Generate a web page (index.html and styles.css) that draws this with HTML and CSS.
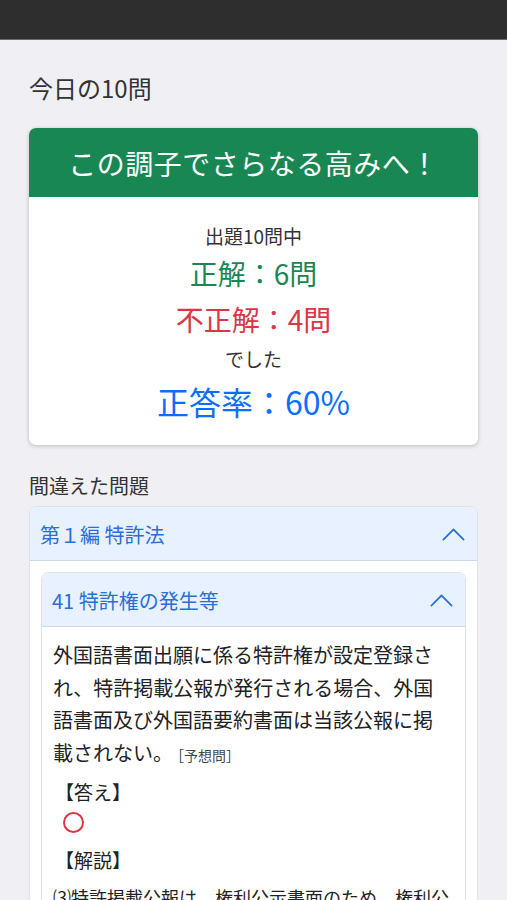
FILE: index.html
```html
<!DOCTYPE html>
<html lang="ja">
<head>
<meta charset="utf-8">
<title>今日の10問</title>
<link rel="stylesheet" href="styles.css">
</head>
<body>
<div class="topbar"></div>
<main class="page">
  <h1 class="page-title">今日の10問</h1>

  <section class="result-card">
    <div class="result-head">この調子でさらなる高みへ！</div>
    <div class="result-body">
      <p class="line small">出題10問中</p>
      <p class="line big green">正解：6問</p>
      <p class="line big red">不正解：4問</p>
      <p class="line small gap">でした</p>
      <p class="line huge blue">正答率：60%</p>
    </div>
  </section>

  <h2 class="section-title">間違えた問題</h2>

  <div class="accordion">
    <div class="acc-head">
      <span class="acc-label">第１編 特許法</span>
      <svg class="chev" viewBox="0 0 16 16"><path d="M1.646 11.354a.5.5 0 0 0 .708 0L8 5.707l5.646 5.647a.5.5 0 0 0 .708-.708l-6-6a.5.5 0 0 0-.708 0l-6 6a.5.5 0 0 0 0 .708z"/></svg>
    </div>
    <div class="acc-body">
      <div class="accordion inner">
        <div class="acc-head">
          <span class="acc-label">41 特許権の発生等</span>
          <svg class="chev" viewBox="0 0 16 16"><path d="M1.646 11.354a.5.5 0 0 0 .708 0L8 5.707l5.646 5.647a.5.5 0 0 0 .708-.708l-6-6a.5.5 0 0 0-.708 0l-6 6a.5.5 0 0 0 0 .708z"/></svg>
        </div>
        <div class="acc-body question">
          <p class="q-text">外国語書面出願に係る特許権が設定登録され、特許掲載公報が発行される場合、外国語書面及び外国語要約書面は当該公報に掲載されない。<span class="q-tag">［予想問］</span></p>
          <p class="label answer-label">【答え】</p>
          <div class="maru"></div>
          <p class="label">【解説】</p>
          <p class="explain">⑶特許掲載公報は、権利公示書面のため、権利公示に必要な事項を掲載する。</p>
        </div>
      </div>
    </div>
  </div>
</main>
</body>
</html>
```

FILE: styles.css
```css
* { box-sizing: border-box; }
html, body { margin: 0; padding: 0; }
body {
  background: #efeff4;
  font-family: "Noto Sans CJK JP", "Noto Sans", sans-serif;
  color: #212529;
  height: 900px;
  overflow: hidden;
}
p { margin: 0; }

.topbar {
  height: 40px;
  background: #2e2e2e;
  border-bottom: 1px solid #6a6a6a;
}

.page {
  padding: 32px 29px 0 29px;
}

.page-title {
  margin: 0;
  font-size: 24px;
  font-weight: 400;
  line-height: 32px;
  color: #333;
}

.result-card {
  margin-top: 24px;
  background: #fff;
  border-radius: 7px;
  box-shadow: 0 1px 4px rgba(0,0,0,0.22);
  overflow: hidden;
}
.result-head {
  background: #198754;
  color: #fff;
  height: 69px;
  display: flex;
  align-items: center;
  justify-content: center;
  font-size: 28px;
  letter-spacing: 0.5px;
}
.result-body {
  padding: 25px 0 19px;
  text-align: center;
}
.line { color: #333; }
.line.small { font-size: 19px; line-height: 28px; }
.line.big { font-size: 28px; line-height: 46px; }
.line.gap { line-height: 34px; }
.line.huge { font-size: 32px; line-height: 50px; }
.green { color: #198754 !important; }
.red { color: #dc3545 !important; }
.blue { color: #0d6efd !important; }

.section-title {
  margin: 27px 0 0;
  font-size: 20px;
  font-weight: 400;
  line-height: 28px;
  color: #333;
}

.accordion {
  margin-top: 6px;
  background: #fff;
  border: 1px solid #dfe3e9;
  border-radius: 7px;
  overflow: hidden;
}
.acc-head {
  height: 54px;
  background: #e7f1ff;
  box-shadow: inset 0 -1px 0 rgba(0,0,0,0.1);
  display: flex;
  align-items: center;
  justify-content: space-between;
  padding: 0 10px 0 10px;
}
.acc-label {
  font-size: 20px;
  color: #2a6fd6;
}
.chev {
  width: 27px;
  height: 27px;
  fill: #2a6fd6;
}
.acc-body {
  padding: 11px;
}
.accordion.inner {
  margin-top: 0;
}
.acc-body.question {
  padding: 12px 13px 20px 11px;
}
.q-text {
  font-size: 20px;
  line-height: 32.5px;
  color: #222;
}
.q-tag {
  font-size: 14px;
  color: #444;
  margin-left: 4px;
}
.label {
  font-size: 19px;
  line-height: 28px;
  color: #222;
  padding-left: 2px;
}
.answer-label { margin-top: 7px; }
.maru {
  width: 21px;
  height: 21px;
  border: 2px solid #dc3545;
  border-radius: 50%;
  margin: 6px 0 13px 10px;
}
.explain {
  margin-top: 8px;
  font-size: 18px;
  line-height: 30px;
  color: #222;
}
```
